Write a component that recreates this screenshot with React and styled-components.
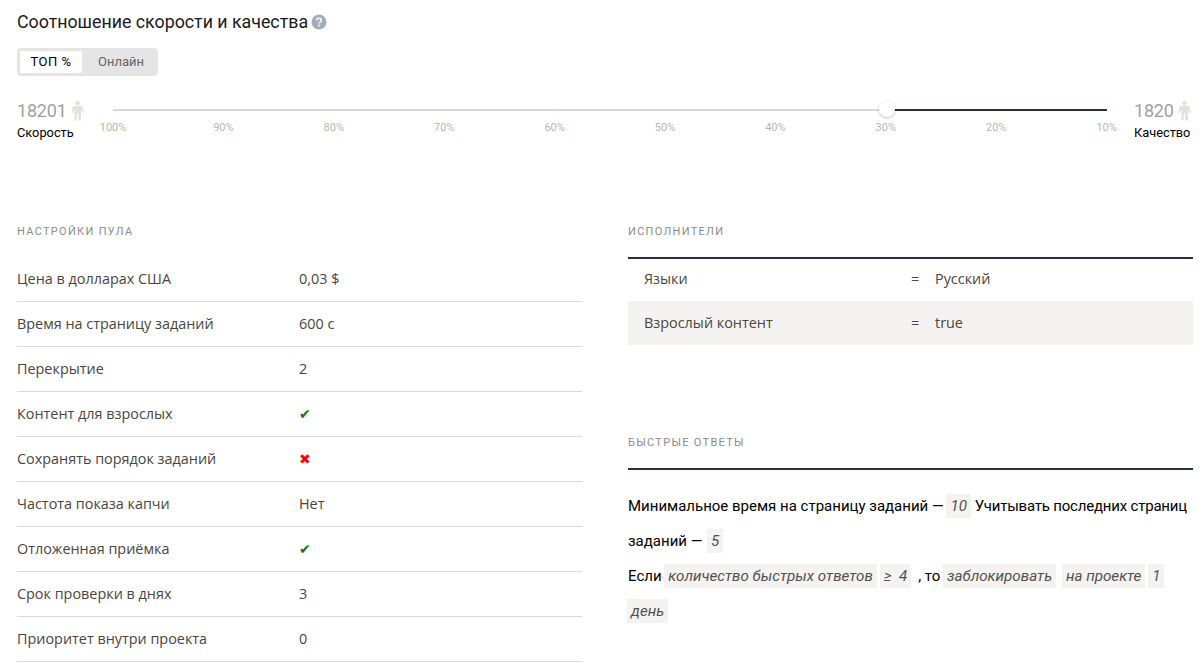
import React from 'react';
import styled, { createGlobalStyle } from 'styled-components';

const GlobalStyle = createGlobalStyle`
  html, body { margin: 0; padding: 0; background: #fff; }
  body { font-family: "Open Sans", "Noto Sans", sans-serif; color: #000; overflow: hidden; }
`;

const Page = styled.div`
  width: 1204px;
  height: 667px;
  padding: 0 11px 0 17px;
  box-sizing: border-box;
  overflow: hidden;
`;

const TitleRow = styled.div`
  display: flex;
  align-items: center;
  gap: 3px;
  height: 22px;
  margin-top: 11px;
`;

const Title = styled.h1`
  margin: 0;
  font: 400 17.8px/22px Roboto, sans-serif;
  color: #1a1a1a;
`;

const Tabs = styled.div`
  display: inline-flex;
  margin-top: 15px;
  padding: 3px 0 3px 3px;
  height: 22px;
  background: #e5e5e5;
  border-radius: 4px;
`;

const Tab = styled.div`
  display: flex;
  align-items: center;
  justify-content: center;
  box-sizing: border-box;
  width: ${p => (p.$active ? '62px' : '76px')};
  padding-left: ${p => (p.$active ? '0' : '2px')};
  font: 400 13px/22px Roboto, sans-serif;
  letter-spacing: ${p => (p.$active ? '0.5px' : '0')};
  color: ${p => (p.$active ? '#000' : '#666')};
  background: ${p => (p.$active ? '#fff' : 'transparent')};
  border-radius: 2px;
`;

const SliderRow = styled.div`
  display: flex;
  align-items: flex-start;
  margin-top: 23px;
  height: 125px;
`;

const Side = styled.div`
  flex: none;
  width: ${p => p.$width}px;
  margin-left: ${p => p.$offset || 0}px;
`;

const Count = styled.div`
  display: flex;
  align-items: center;
  gap: 4px;
  font: 400 18px/24px Roboto, sans-serif;
  letter-spacing: -0.2px;
  color: #a39f9b;
`;

const SideLabel = styled.div`
  font: 400 12.8px/16px Roboto, sans-serif;
  color: #000;
  margin-top: 2px;
`;

const Track = styled.div`
  position: relative;
  flex: none;
  width: 994px;
  height: 2px;
  margin-top: 10px;
  background: #d9d9d9;
`;

const TrackFill = styled.div`
  position: absolute;
  top: 0;
  right: 0;
  height: 2px;
  background: #263243;
`;

const Thumb = styled.div`
  position: absolute;
  top: -8px;
  width: 16px;
  height: 16px;
  margin-left: -8px;
  border-radius: 50%;
  background: #fff;
  box-shadow: 0 1px 3px rgba(0, 0, 0, 0.25);
`;

const Mark = styled.span`
  position: absolute;
  top: 12px;
  transform: translateX(-50%);
  font: 400 11px/13px Roboto, sans-serif;
  color: #b8b6b4;
`;

const Columns = styled.div`
  display: grid;
  grid-template-columns: 565px 565px;
  column-gap: 46px;
`;

const SectionTitle = styled.h2`
  margin: 0;
  font: 400 11px/16px Roboto, sans-serif;
  letter-spacing: 1.3px;
  text-transform: uppercase;
  color: #8c8c8c;
`;

const Rows = styled.div`
  margin-top: 17px;
`;

const Row = styled.div`
  display: flex;
  align-items: center;
  height: 44px;
  box-sizing: border-box;
  padding-bottom: 2px;
  box-shadow: 0 1px 0 #d9d9d9;
  margin-bottom: 1px;
  font-size: 14.4px;
  color: #4a4541;
`;

const RowName = styled.div`
  width: 282px;
`;

const Check = styled.span`
  font-family: "DejaVu Sans", sans-serif;
  font-size: 14px;
  color: ${p => (p.$no ? '#f00' : '#0a7a0a')};
`;

const RightCol = styled.div``;

const Table = styled.div`
  margin-top: 17px;
  border-top: 2px solid #263243;
`;

const TableRow = styled.div`
  display: flex;
  align-items: center;
  box-sizing: border-box;
  height: ${p => (p.$odd ? 42 : 44)}px;
  padding: 0 0 ${p => (p.$odd ? 3 : 2)}px 16px;
  background: ${p => (p.$odd ? '#fff' : '#f4f3f1')};
  font-size: 14.4px;
  color: #4a4541;
`;

const TableKey = styled.div`
  width: 267px;
`;

const TableOp = styled.div`
  width: 24px;
`;

const AnswersTitle = styled(SectionTitle)`
  margin-top: 90px;
`;

const Answers = styled.div`
  margin-top: 17px;
  padding-top: 19px;
  border-top: 2px solid #263243;
`;

const AnswersText = styled.div`
  font: 400 15px/35px Roboto, sans-serif;
  color: #000;
`;

const Tight = styled.span`
  letter-spacing: -0.2px;
`;

const Chip = styled.span`
  display: inline-block;
  padding: 0 4px;
  line-height: 24px;
  margin-left: ${p => p.$before ?? -1}px;
  margin-right: ${p => p.$after || 0}px;
  background: #f4f3f1;
  font-style: italic;
  font-size: 15.2px;
  color: #55504c;
`;

const HelpIcon = () => (
  <svg width="16" height="16" viewBox="0 0 16 16">
    <circle cx="8" cy="8" r="7.5" fill="#a5adb8" />
    <path d="M5.8 6.3c0-1.3 1-2 2.3-2s2.2.8 2.2 1.9c0 1.7-2.2 1.6-2.2 3.3" fill="none" stroke="#fff" strokeWidth="1.6" />
    <circle cx="8.1" cy="11.6" r="1" fill="#fff" />
  </svg>
);

const Person = () => (
  <svg width="13" height="20" viewBox="0 0 13 20" fill="#e3e1de">
    <circle cx="6.5" cy="2.3" r="2.3" />
    <path d="M3.2 5h6.6c1 0 1.6.6 1.8 1.5l1.2 5.3-1.4.4-1.4-4.4v11.7H7.2v-7H5.8v7H3.5V7.8l-1.4 4.4-1.4-.4L1.4 6.5C1.6 5.6 2.2 5 3.2 5z" />
  </svg>
);

const marks = [100, 90, 80, 70, 60, 50, 40, 30, 20, 10];
const settings = [
  ['Цена в долларах США', '0,03 $'],
  ['Время на страницу заданий', '600 с'],
  ['Перекрытие', '2'],
  ['Контент для взрослых', <Check>✔</Check>],
  ['Сохранять порядок заданий', <Check $no>✖</Check>],
  ['Частота показа капчи', 'Нет'],
  ['Отложенная приёмка', <Check>✔</Check>],
  ['Срок проверки в днях', '3'],
  ['Приоритет внутри проекта', '0'],
];

export default function App() {
  return (
    <Page>
      <GlobalStyle />
      <TitleRow>
        <Title>Соотношение скорости и качества</Title>
        <HelpIcon />
      </TitleRow>
      <Tabs>
        <Tab $active>ТОП %</Tab>
        <Tab>Онлайн</Tab>
      </Tabs>
      <SliderRow>
        <Side $width={96}>
          <Count>18201<Person /></Count>
          <SideLabel>Скорость</SideLabel>
        </Side>
        <Track>
          <TrackFill style={{ width: 220 }} />
          {marks.map((m, i) => (
            <Mark key={m} style={{ left: i * 110.4 }}>{m}%</Mark>
          ))}
          <Thumb style={{ left: 774 }} />
        </Track>
        <Side $width={60} $offset={27}>
          <Count>1820<Person /></Count>
          <SideLabel>Качество</SideLabel>
        </Side>
      </SliderRow>
      <Columns>
        <div>
          <SectionTitle>Настройки пула</SectionTitle>
          <Rows>
            {settings.map(([name, value]) => (
              <Row key={name}>
                <RowName>{name}</RowName>
                <div>{value}</div>
              </Row>
            ))}
          </Rows>
        </div>
        <RightCol>
          <SectionTitle>Исполнители</SectionTitle>
          <Table>
            <TableRow $odd>
              <TableKey>Языки</TableKey>
              <TableOp>=</TableOp>
              <div>Русский</div>
            </TableRow>
            <TableRow>
              <TableKey>Взрослый контент</TableKey>
              <TableOp>=</TableOp>
              <div>true</div>
            </TableRow>
          </Table>
          <AnswersTitle>Быстрые ответы</AnswersTitle>
          <Answers>
            <AnswersText>
              Минимальное время на страницу заданий — <Chip>10</Chip> <Tight>Учитывать последних страниц</Tight> заданий — <Chip $before={1}>5</Chip>
              <br />
              Если <Chip>количество быстрых ответов</Chip> <Chip $after={7}>≥&nbsp;&nbsp;4</Chip>, то <Chip $after={3}>заблокировать</Chip> <Chip>на проекте</Chip> <Chip>1</Chip> <Chip>день</Chip>
            </AnswersText>
          </Answers>
        </RightCol>
      </Columns>
    </Page>
  );
}
